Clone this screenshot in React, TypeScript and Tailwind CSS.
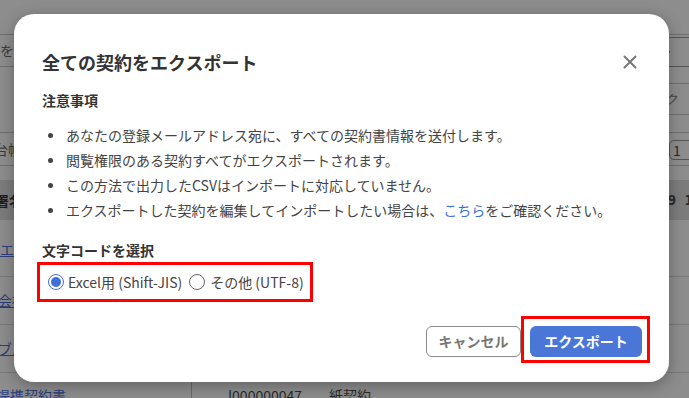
import React from "react";

const font = { fontFamily: '"Noto Sans CJK JP", "Noto Sans", sans-serif' };

function Background() {
  return (
    <div className="w-[689px] h-[398px] bg-[#8d8d8d] overflow-hidden text-[14px] text-[#2a2a2a]" style={font}>
      <div className="h-[34px]" />
      <div className="flex h-[33px] border-y border-[#6f6f6f]">
        <div className="w-[60px] leading-[31px] text-[#3a3a3a]">を指定</div>
        <div className="flex-1" />
        <div className="w-[40px] mr-[-10px] mt-[2px] h-[30px] border border-[#555] rounded-[6px] text-[#333] leading-[28px] pl-[3px]">▾</div>
      </div>
      <div className="flex h-[65px]">
        <div className="flex-1" />
        <div className="w-[40px] mt-[16px] h-[32px] border-y border-[#6f6f6f] leading-[30px] italic text-[#4a4a4a]">をク</div>
      </div>
      <div className="h-[34px] border-y border-[#6f6f6f] flex">
        <div className="w-[60px] ml-[-6px] leading-[32px] text-[#3a3a3a]">台帳</div>
        <div className="flex-1" />
        <div className="w-[40px] mr-[-20px] mt-[7px] h-[20px] border border-[#555] rounded-[5px] leading-[18px] pl-[3px]">1</div>
      </div>
      <div className="h-[14px]" />
      <div className="h-[40px] bg-[#7c7c7c] flex items-center">
        <div className="font-bold text-[#1f1f1f] ml-[-5px]">署名</div>
        <div className="flex-1" />
        <div className="font-bold mr-[-4px]" style={{ fontFamily: '"DejaVu Sans Mono", monospace' }}>9 1</div>
      </div>
      <div className="h-[57px] border-b border-[#7a7a7a] flex items-center">
        <div className="underline text-[#2b3f7a] pt-[2px]">エクスポート</div>
      </div>
      <div className="h-[48px] border-b border-[#7a7a7a] flex items-center">
        <div className="underline text-[#2b3f7a] ml-[-2px]">会社</div>
      </div>
      <div className="h-[48px] border-b border-[#7a7a7a] flex items-center">
        <div className="underline text-[#2b3f7a] ml-[-2px]">ブル</div>
      </div>
      <div className="flex h-[30px]">
        <div className="w-[196px] border-r border-[#6a6a6a] text-[#2b3f7a] pt-[12px] ml-[-4px]">提携契約書</div>
        <div className="pl-[36px] pt-[12px] text-[#2a2a2a]">I000000047</div>
        <div className="pl-[27px] pt-[12px] text-[#2a2a2a]">紙契約</div>
      </div>
    </div>
  );
}

function Radio({ checked }: { checked: boolean }) {
  return (
    <span
      className={
        "w-[16px] h-[16px] rounded-full border-[1.5px] flex items-center justify-center shrink-0 " +
        (checked ? "border-[#3f6fd8]" : "border-[#666]")
      }
    >
      {checked && <span className="w-[10px] h-[10px] rounded-full bg-[#3f6fd8]" />}
    </span>
  );
}

const bullets = [
  "あなたの登録メールアドレス宛に、すべての契約書情報を送付します。",
  "閲覧権限のある契約すべてがエクスポートされます。",
  "この方法で出力したCSVはインポートに対応していません。",
];

export default function App() {
  return (
    <div className="relative w-[689px] h-[398px] overflow-hidden" style={font}>
      <Background />
      <div className="absolute left-[14px] top-[14px] w-[655px] h-[368px] bg-white rounded-[20px] shadow-[0_4px_16px_rgba(0,0,0,0.3)] flex flex-col">
        <div className="pt-[35px] pl-[28px] pr-[32px] flex items-center justify-between">
          <div className="text-[18px] leading-[26px] font-bold text-[#333]">全ての契約をエクスポート</div>
          <svg width="14" height="14" viewBox="0 0 14 14">
            <path d="M1.5 1.5 L12.5 12.5 M12.5 1.5 L1.5 12.5" stroke="#777" strokeWidth="2" strokeLinecap="round" />
          </svg>
        </div>
        <div className="pl-[28px] mt-[14px] text-[14px] leading-[22px] font-bold text-[#333]">注意事項</div>
        <ul className="pl-[28px] mt-[12px] text-[14px] leading-[25px] text-[#444]">
          {bullets.map((b) => (
            <li key={b} className="flex items-center">
              <span className="w-[5px] h-[5px] rounded-full bg-[#444] ml-[6px] mr-[13px]" />
              {b}
            </li>
          ))}
          <li className="flex items-center">
            <span className="w-[5px] h-[5px] rounded-full bg-[#444] ml-[6px] mr-[13px]" />
            エクスポートした契約を編集してインポートしたい場合は、
            <span className="text-[#3a70d8]">こちら</span>
            をご確認ください。
          </li>
        </ul>
        <div className="pl-[28px] mt-[16px] text-[14px] leading-[22px] font-bold text-[#333]">文字コードを選択</div>
        <div className="ml-[23px] mt-[1px] w-[276px] h-[40px] border-[3px] border-[#f00] flex items-center pl-[8px] text-[14px] text-[#444]">
          <Radio checked />
          <span className="ml-[4px]">Excel用 (Shift-JIS)</span>
          <span className="ml-[7px]"><Radio checked={false} /></span>
          <span className="ml-[5px]">その他 (UTF-8)</span>
        </div>
        <div className="mt-auto pb-[19px] pr-[19px] flex justify-end items-start">
          <button className="mt-[10px] w-[95px] h-[31px] border border-[#8a8a8a] rounded-[6px] text-[14px] font-bold text-[#777] bg-white">
            キャンセル
          </button>
          <div className="border-[3px] border-[#f00] pl-[6px] pr-[5px] pt-[7px] pb-[3px]">
            <button className="w-[112px] h-[31px] rounded-[6px] bg-[#4a76d8] text-white text-[14px] font-bold">
              エクスポート
            </button>
          </div>
        </div>
      </div>
    </div>
  );
}
